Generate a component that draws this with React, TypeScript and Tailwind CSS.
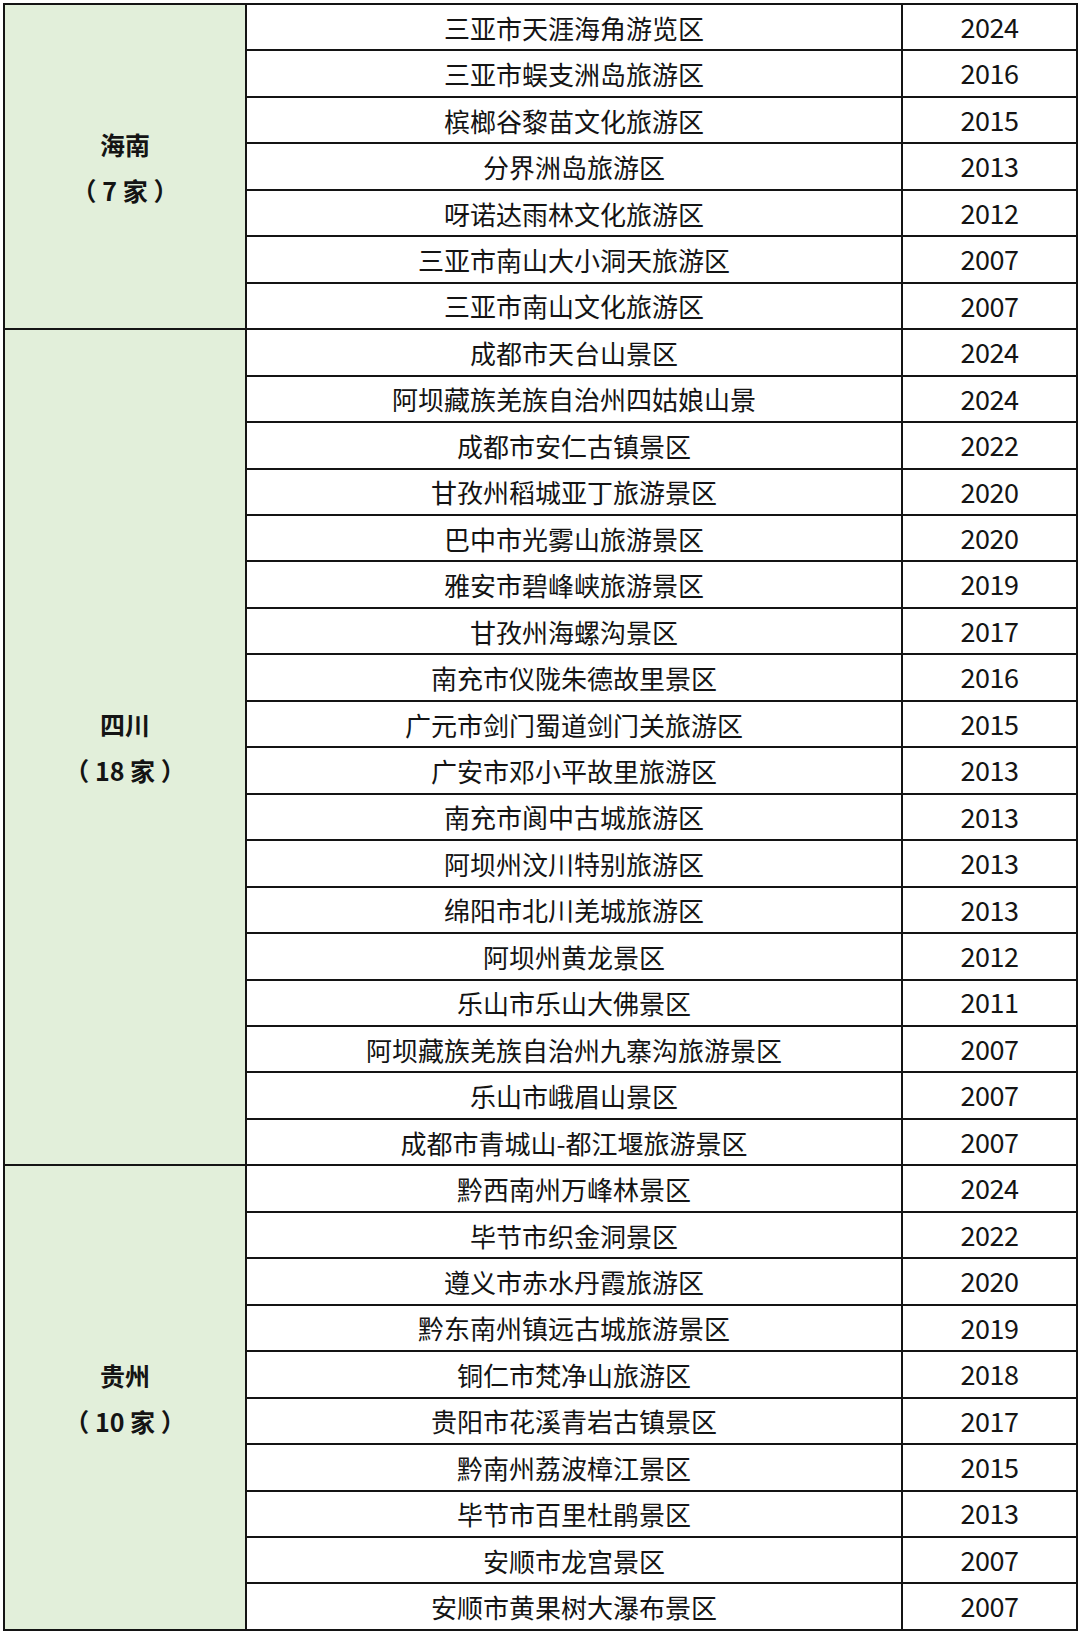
const groups: { name: string; count: string; rows: [string, string][] }[] = [
  {
    name: "海南",
    count: "（ 7 家 ）",
    rows: [
      ["三亚市天涯海角游览区", "2024"],
      ["三亚市蜈支洲岛旅游区", "2016"],
      ["槟榔谷黎苗文化旅游区", "2015"],
      ["分界洲岛旅游区", "2013"],
      ["呀诺达雨林文化旅游区", "2012"],
      ["三亚市南山大小洞天旅游区", "2007"],
      ["三亚市南山文化旅游区", "2007"],
    ],
  },
  {
    name: "四川",
    count: "（ 18 家 ）",
    rows: [
      ["成都市天台山景区", "2024"],
      ["阿坝藏族羌族自治州四姑娘山景", "2024"],
      ["成都市安仁古镇景区", "2022"],
      ["甘孜州稻城亚丁旅游景区", "2020"],
      ["巴中市光雾山旅游景区", "2020"],
      ["雅安市碧峰峡旅游景区", "2019"],
      ["甘孜州海螺沟景区", "2017"],
      ["南充市仪陇朱德故里景区", "2016"],
      ["广元市剑门蜀道剑门关旅游区", "2015"],
      ["广安市邓小平故里旅游区", "2013"],
      ["南充市阆中古城旅游区", "2013"],
      ["阿坝州汶川特别旅游区", "2013"],
      ["绵阳市北川羌城旅游区", "2013"],
      ["阿坝州黄龙景区", "2012"],
      ["乐山市乐山大佛景区", "2011"],
      ["阿坝藏族羌族自治州九寨沟旅游景区", "2007"],
      ["乐山市峨眉山景区", "2007"],
      ["成都市青城山-都江堰旅游景区", "2007"],
    ],
  },
  {
    name: "贵州",
    count: "（ 10 家 ）",
    rows: [
      ["黔西南州万峰林景区", "2024"],
      ["毕节市织金洞景区", "2022"],
      ["遵义市赤水丹霞旅游区", "2020"],
      ["黔东南州镇远古城旅游景区", "2019"],
      ["铜仁市梵净山旅游区", "2018"],
      ["贵阳市花溪青岩古镇景区", "2017"],
      ["黔南州荔波樟江景区", "2015"],
      ["毕节市百里杜鹃景区", "2013"],
      ["安顺市龙宫景区", "2007"],
      ["安顺市黄果树大瀑布景区", "2007"],
    ],
  },
];

export default function App() {
  return (
    <div className="min-h-screen w-[1080px] bg-white pt-[3px] pl-[3px] text-[#141414] [font-family:'Noto_Sans_CJK_SC','Noto_Sans',sans-serif]">
      <div className="flex w-[1075px] flex-col border-2 border-[#141414]">
        {groups.map((g, gi) => (
          <div key={g.name} className={gi > 0 ? "flex border-t-2 border-[#141414]" : "flex"}>
            <div className="flex w-[242px] shrink-0 flex-col items-center justify-center border-r-2 border-[#141414] bg-[#e2efda] text-[25px] font-bold leading-[46px]">
              <div>{g.name}</div>
              <div className="whitespace-pre">{g.count}</div>
            </div>
            <div className="flex flex-1 flex-col">
              {g.rows.map(([place, year], ri) => (
                <div
                  key={place}
                  className={
                    ri > 0
                      ? "flex h-[46.46px] border-t-2 border-[#141414]"
                      : "flex h-[44.46px]"
                  }
                >
                  <div className="flex flex-1 items-center justify-center border-r-2 border-[#141414] text-[26px]">
                    {place}
                  </div>
                  <div className="flex w-[173px] shrink-0 items-center justify-center text-[27px] tracking-[-0.5px]">
                    {year}
                  </div>
                </div>
              ))}
            </div>
          </div>
        ))}
      </div>
    </div>
  );
}
